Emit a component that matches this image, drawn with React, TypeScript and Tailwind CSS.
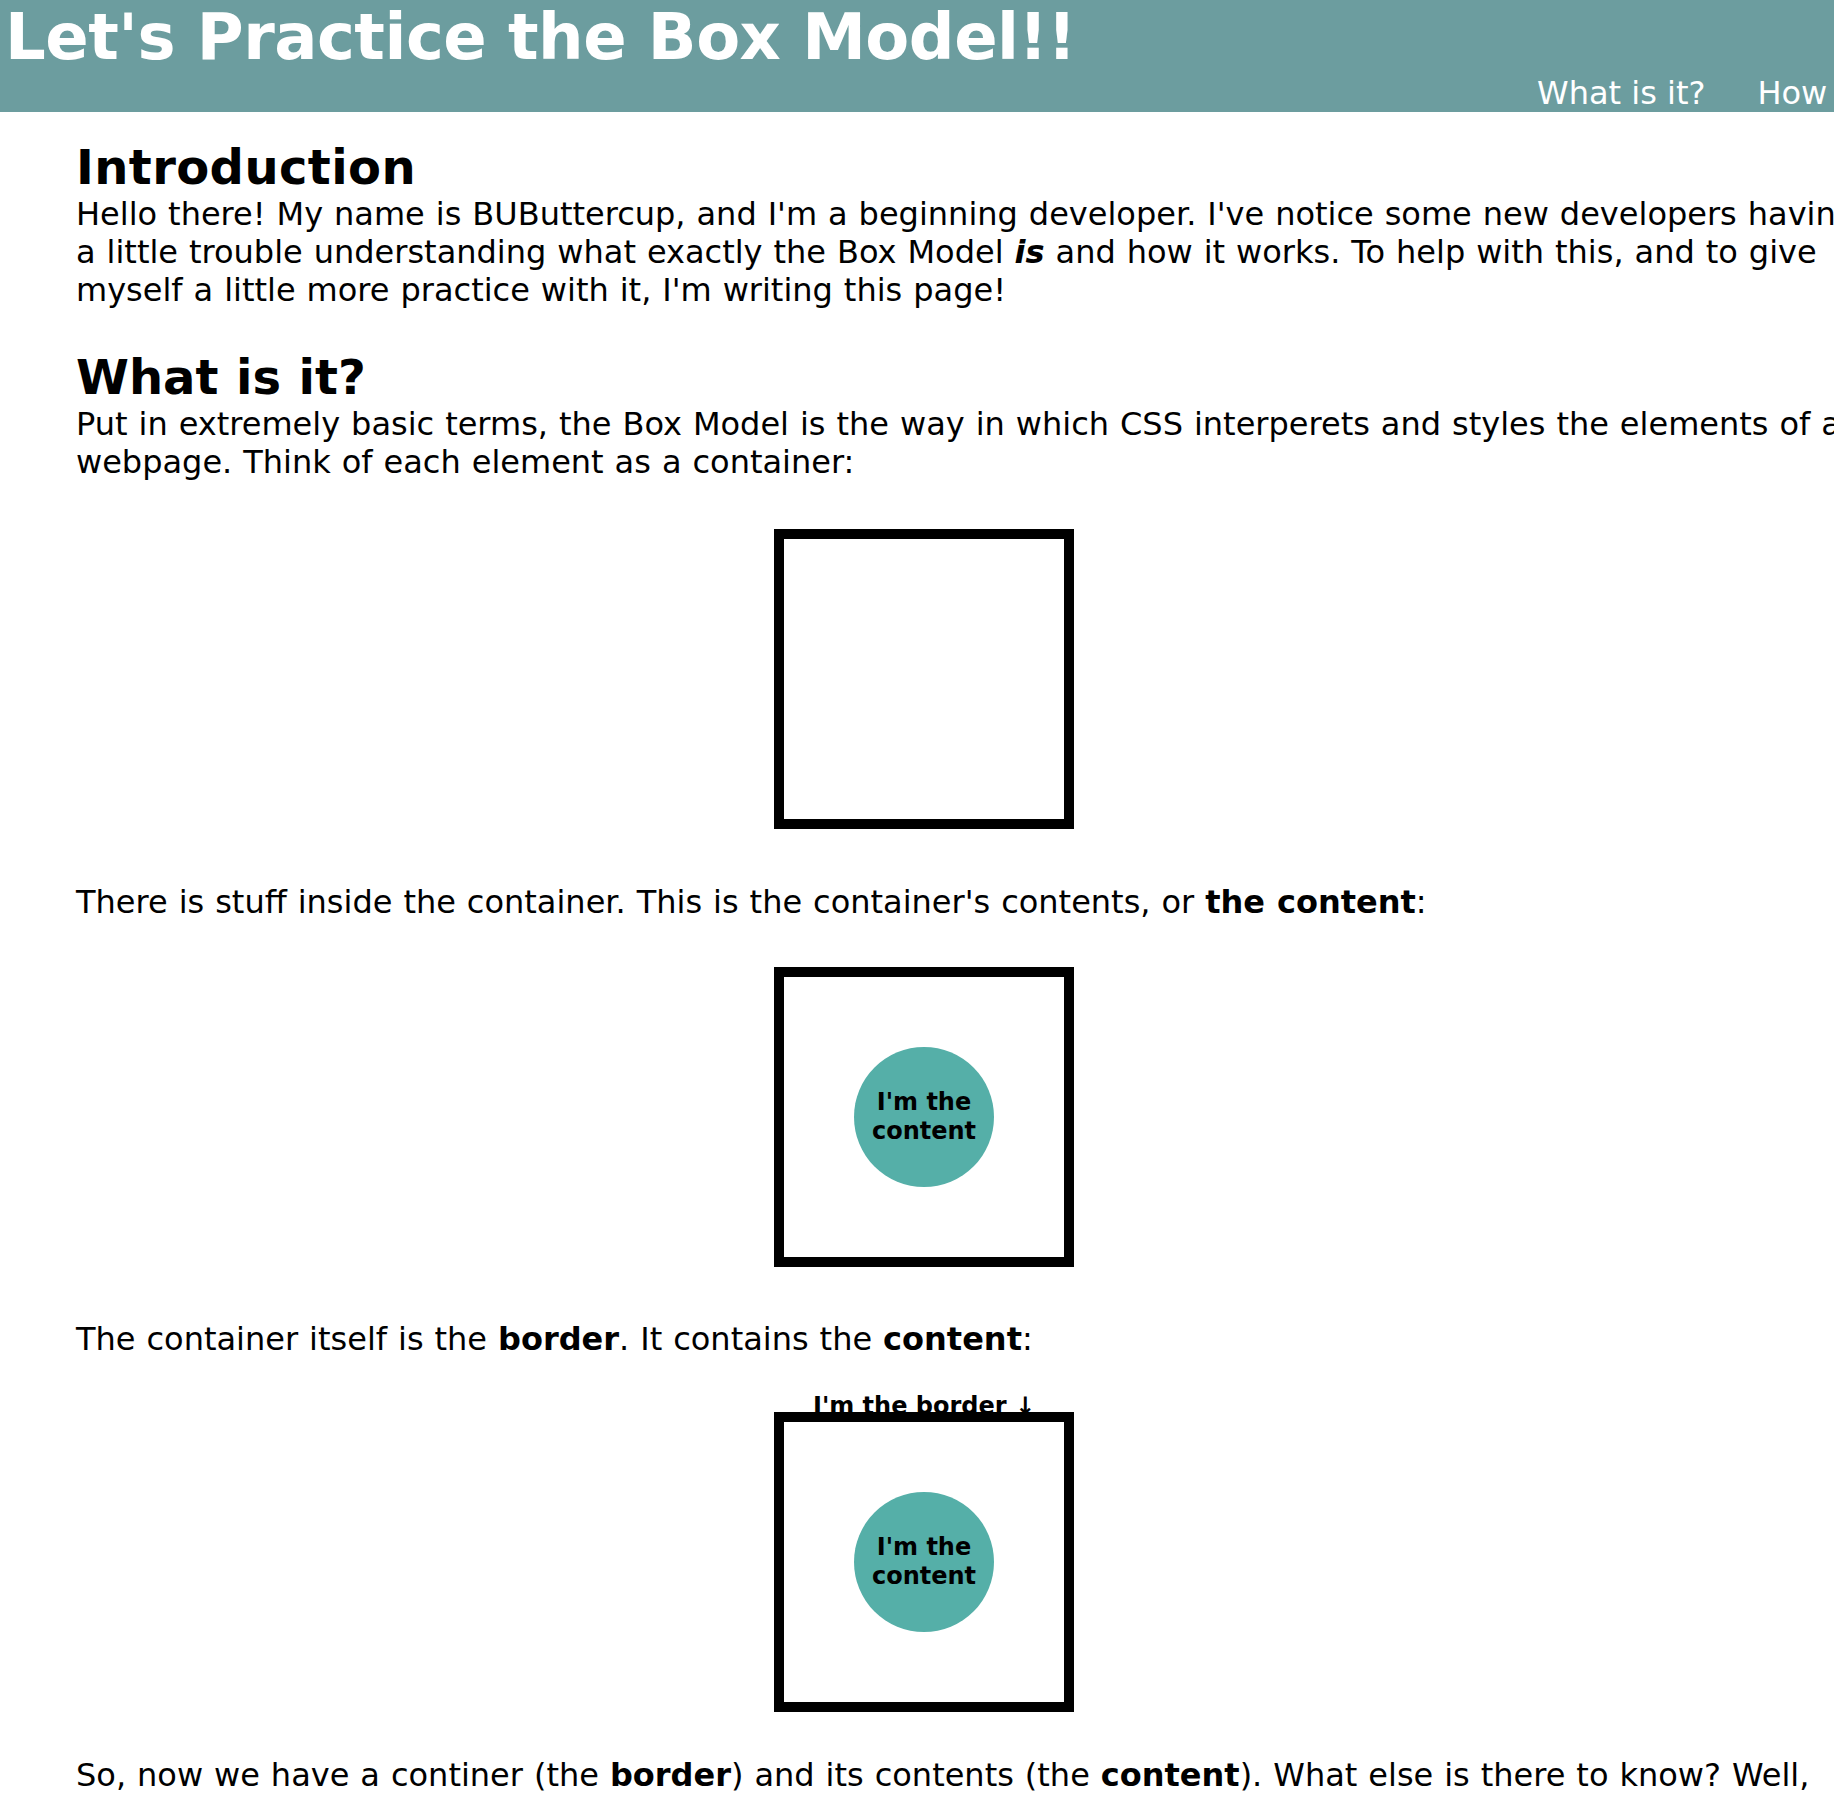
export default function App() {
  return (
    <div className="w-full min-h-[1800px] overflow-hidden bg-white text-black font-['DejaVu_Sans',Verdana,sans-serif]">
      {/* header */}
      <header className="h-[112px] bg-[#6c9d9f] text-white">
        <h1 className="pl-[5px] text-[64px] font-bold leading-[normal] tracking-[-0.5px] whitespace-nowrap">
          Let's Practice the Box Model!!
        </h1>
        <nav className="flex gap-[52px] pl-[1537px] text-[32px] leading-[normal] whitespace-nowrap">
          <a href="#what">What is it?</a>
          <a href="#how">How does it work?</a>
        </nav>
      </header>

      <main className="ml-[76px] w-[1696px] text-[32px] leading-[normal] [word-spacing:0.8px]">
        {/* intro */}
        <h2 className="mt-[27px] text-[48px] font-bold leading-[normal] tracking-[0.4px]">Introduction</h2>
        <p className="w-[1790px]">
          Hello there! My name is BUButtercup, and I'm a beginning developer. I've notice some new
          developers having a little trouble understanding what exactly the Box Model{" "}
          <b>
            <i>is</i>
          </b>{" "}
          and how it works. To help with this, and to give myself a little more practice with it,
          I'm writing this page!
        </p>

        {/* what is it */}
        <h2 id="what" className="mt-[40px] text-[48px] font-bold leading-[normal]">
          What is it?
        </h2>
        <p className="w-[1790px]">
          Put in extremely basic terms, the Box Model is the way in which CSS interperets and styles
          the elements of a webpage. Think of each element as a container:
        </p>

        <div className="mx-auto mt-[48px] h-[300px] w-[300px] border-[10px] border-black"></div>

        <p className="mt-[54px] w-[1790px]">
          There is stuff inside the container. This is the container's contents, or{" "}
          <b>the content</b>:
        </p>

        <div className="mx-auto mt-[46px] flex h-[300px] w-[300px] items-center justify-center border-[10px] border-black">
          <div className="flex h-[140px] w-[140px] items-center justify-center rounded-full bg-[#55afa8] text-center text-[24px] font-bold leading-[29px] [word-spacing:0px]">
            I'm the
            <br />
            content
          </div>
        </div>

        <p className="mt-[53px] w-[1790px]">
          The container itself is the <b>border</b>. It contains the <b>content</b>:
        </p>

        <div className="mt-[34px] text-center text-[24px] font-bold leading-[normal] [word-spacing:0px]">
          I'm the border ↓
        </div>
        <div className="mx-auto -mt-[8px] flex h-[300px] w-[300px] items-center justify-center border-[10px] border-black">
          <div className="flex h-[140px] w-[140px] items-center justify-center rounded-full bg-[#55afa8] text-center text-[24px] font-bold leading-[29px] [word-spacing:0px]">
            I'm the
            <br />
            content
          </div>
        </div>

        <p className="mt-[44px] w-[1790px]">
          So, now we have a continer (the <b>border</b>) and its contents (the <b>content</b>). What
          else is there to know? Well, we'd also need to think about the space between the content
          and the border, and the space outside of the border too. That's where padding and margin
          come in!
        </p>
      </main>
    </div>
  );
}
